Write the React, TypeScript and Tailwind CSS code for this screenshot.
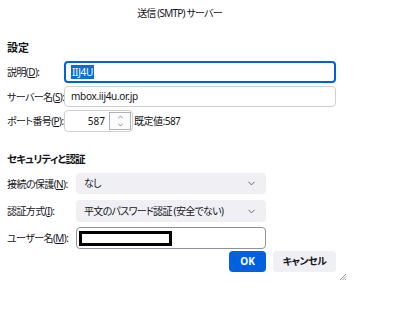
import { ChevronDown, ChevronUp } from "lucide-react";

const font = "font-['Noto_Sans','Noto_Sans_CJK_JP',sans-serif] [font-feature-settings:'palt']";

const Label = ({ text, k, width }: { text: string; k: string; width: string }) => (
  <div className={`${width} shrink-0 whitespace-nowrap text-[10px] leading-none tracking-[-0.6px] text-[#15141a]`}>
    {text}(<u>{k}</u>):
  </div>
);

const Select = ({ value }: { value: string }) => (
  <div className="flex h-full w-[190px] items-center justify-between rounded-[4px] bg-[#f0f0f4] pl-[8px] pr-[8px]">
    <span className="whitespace-nowrap text-[10px] tracking-[-0.7px] text-[#15141a]">{value}</span>
    <ChevronDown className="mr-[1px] h-[11px] w-[11px] text-[#5b5b66]" strokeWidth={2} />
  </div>
);

export default function App() {
  return (
    <div className={`relative h-[318px] w-[400px] overflow-hidden bg-white px-[7px] text-[#15141a] ${font}`}>
      {/* title */}
      <div className="flex h-[26px] items-center justify-center pr-[41px] text-[10px] tracking-[-0.8px]">送信 (SMTP) サーバー</div>

      {/* 設定 */}
      <h2 className="mt-[14px] flex h-[16px] items-center text-[11px] font-bold">設定</h2>

      <div className="mt-[5px] flex h-[22px] items-center">
        <Label text="説明" k="D" width="w-[57px]" />
        <div className="flex h-full w-[272px] items-center rounded-[4px] border-2 border-[#0061e0] px-[5px]">
          <span className="bg-[#0a6ed9] px-[1px] text-[10px] leading-[14px] tracking-[-0.3px] text-white">IIJ4U</span>
        </div>
      </div>

      <div className="mt-[3px] flex h-[21px] items-center">
        <Label text="サーバー名" k="S" width="w-[57px]" />
        <div className="flex h-full w-[272px] items-center rounded-[4px] border border-[#cfcfd8] px-[6px] text-[10px] tracking-[-0.3px]">
          mbox.iij4u.or.jp
        </div>
      </div>

      <div className="mt-[3px] flex h-[22px] items-center">
        <Label text="ポート番号" k="P" width="w-[57px]" />
        <div className="flex h-full w-[69px] items-center justify-end rounded-[4px] border border-[#cfcfd8] pr-[1px]">
          <span className="mr-[4px] text-[10px]">587</span>
          <div className="flex h-[18px] w-[22px] flex-col items-center justify-center border border-[#b0b0b8] bg-[#fbfbfc]">
            <ChevronUp className="h-[9px] w-[11px] text-[#5b5b66]" strokeWidth={2} />
            <ChevronDown className="h-[9px] w-[11px] text-[#5b5b66]" strokeWidth={2} />
          </div>
        </div>
        <span className="ml-[1px] whitespace-nowrap text-[10px] tracking-[-0.5px]">既定値:587</span>
      </div>

      {/* セキュリティと認証 */}
      <h2 className="mt-[20px] flex h-[16px] items-center whitespace-nowrap text-[10.5px] font-bold tracking-[-0.8px]">セキュリティと認証</h2>

      <div className="mt-[5px] flex h-[21px] items-center">
        <Label text="接続の保護" k="N" width="w-[69px]" />
        <Select value="なし" />
      </div>

      <div className="mt-[6px] flex h-[22px] items-center">
        <Label text="認証方式" k="I" width="w-[69px]" />
        <Select value="平文のパスワード認証 (安全でない)" />
      </div>

      <div className="mt-[5px] flex h-[22px] items-center">
        <Label text="ユーザー名" k="M" width="w-[69px]" />
        <div className="flex h-full w-[190px] items-center rounded-[4px] border border-[#8f8f9d] px-[2px]">
          <div className="h-[15px] w-[93px] border-[3px] border-black bg-white" />
        </div>
      </div>

      <div className="mt-[2px] flex h-[21px] items-center gap-[7px] pl-[222px]">
        <button className="h-full w-[37px] rounded-[4px] bg-[#0061e0] text-[10px] font-bold text-white">OK</button>
        <button className="h-full w-[63px] whitespace-nowrap rounded-[4px] bg-[#f0f0f4] text-[10px] font-bold tracking-[-0.5px] text-[#15141a]">キャンセル</button>
      </div>

      {/* resize grip */}
      <svg className="absolute left-[339px] top-[273px]" width="8" height="8" viewBox="0 0 8 8">
        <path d="M1 7L7 1M3.5 7L7 3.5M6 7L7 6" stroke="#8f8f9d" strokeWidth="0.9" />
      </svg>
    </div>
  );
}
